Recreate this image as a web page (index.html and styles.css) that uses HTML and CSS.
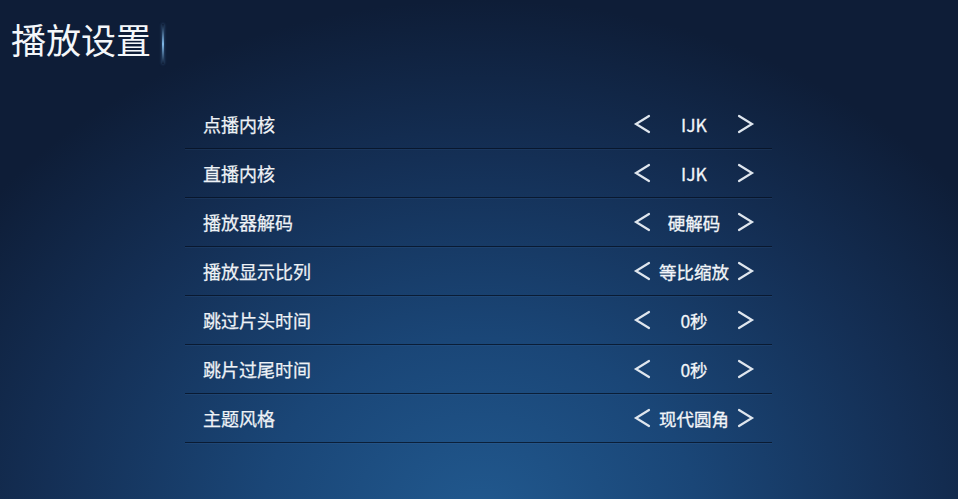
FILE: index.html
```html
<!DOCTYPE html>
<html lang="zh">
<head>
<meta charset="utf-8">
<title>播放设置</title>
<link rel="stylesheet" href="styles.css">
</head>
<body>
<div class="screen">
  <header class="header">
    <h1 class="title">播放设置</h1>
    <span class="glow"></span>
  </header>
  <ul class="list">
    <li class="row"><span class="label">点播内核</span><div class="ctrl"><svg class="arr" viewBox="0 0 18 22"><polyline points="16,3 3,11 16,19"/></svg><span class="val">IJK</span><svg class="arr" viewBox="0 0 18 22"><polyline points="2,3 15,11 2,19"/></svg></div></li>
    <li class="row"><span class="label">直播内核</span><div class="ctrl"><svg class="arr" viewBox="0 0 18 22"><polyline points="16,3 3,11 16,19"/></svg><span class="val">IJK</span><svg class="arr" viewBox="0 0 18 22"><polyline points="2,3 15,11 2,19"/></svg></div></li>
    <li class="row"><span class="label">播放器解码</span><div class="ctrl"><svg class="arr" viewBox="0 0 18 22"><polyline points="16,3 3,11 16,19"/></svg><span class="val">硬解码</span><svg class="arr" viewBox="0 0 18 22"><polyline points="2,3 15,11 2,19"/></svg></div></li>
    <li class="row"><span class="label">播放显示比列</span><div class="ctrl"><svg class="arr" viewBox="0 0 18 22"><polyline points="16,3 3,11 16,19"/></svg><span class="val">等比缩放</span><svg class="arr" viewBox="0 0 18 22"><polyline points="2,3 15,11 2,19"/></svg></div></li>
    <li class="row"><span class="label">跳过片头时间</span><div class="ctrl"><svg class="arr" viewBox="0 0 18 22"><polyline points="16,3 3,11 16,19"/></svg><span class="val">0秒</span><svg class="arr" viewBox="0 0 18 22"><polyline points="2,3 15,11 2,19"/></svg></div></li>
    <li class="row"><span class="label">跳片过尾时间</span><div class="ctrl"><svg class="arr" viewBox="0 0 18 22"><polyline points="16,3 3,11 16,19"/></svg><span class="val">0秒</span><svg class="arr" viewBox="0 0 18 22"><polyline points="2,3 15,11 2,19"/></svg></div></li>
    <li class="row"><span class="label">主题风格</span><div class="ctrl"><svg class="arr" viewBox="0 0 18 22"><polyline points="16,3 3,11 16,19"/></svg><span class="val">现代圆角</span><svg class="arr" viewBox="0 0 18 22"><polyline points="2,3 15,11 2,19"/></svg></div></li>
  </ul>
</div>
</body>
</html>
```

FILE: styles.css
```css
html, body {
  margin: 0;
  padding: 0;
}
body {
  width: 958px;
  height: 499px;
  overflow: hidden;
  font-family: "Noto Sans CJK SC", "Noto Sans", sans-serif;
  color: #e8edf3;
}
.screen {
  width: 958px;
  height: 499px;
  background:
    radial-gradient(ellipse 620px 520px at 480px 520px, #21598f 0%, #1a4677 35%, #142f55 70%, rgba(15,31,58,0) 100%),
    #0e1d37;
  display: flex;
  flex-direction: column;
}
.header {
  height: 100px;
  box-sizing: border-box;
  padding: 20px 0 0 11px;
  display: flex;
  align-items: flex-start;
}
.title {
  margin: 0;
  font-size: 35px;
  line-height: 38px;
  font-weight: 400;
  color: #f4f7fa;
  letter-spacing: 0;
}
.glow {
  width: 2px;
  height: 40px;
  margin: 4px 0 0 11px;
  background: linear-gradient(to bottom, rgba(120,180,230,0) 0%, #7fb6e6 50%, rgba(120,180,230,0) 100%);
  box-shadow: 0 0 3px rgba(110,170,230,0.5);
}
.list {
  list-style: none;
  margin: 0 0 0 185px;
  padding: 0;
  width: 587px;
}
.row {
  height: 48px;
  border-bottom: 1px solid rgba(6,16,34,0.75);
  box-shadow: 0 1px 0 rgba(90,140,200,0.10);
  display: flex;
  align-items: center;
  justify-content: space-between;
  padding: 0 17px 0 18px;
}
.label {
  font-size: 18px;
  font-weight: 400;
  color: #eef2f6;
  -webkit-text-stroke: 0.25px #eef2f6;
}
.ctrl {
  display: flex;
  align-items: center;
}
.arr {
  width: 18px;
  height: 22px;
  fill: none;
  stroke: #dfe6ee;
  stroke-width: 2.2;
  stroke-linecap: round;
  stroke-linejoin: miter;
}
.val {
  width: 86px;
  text-align: center;
  font-size: 17.5px;
  font-weight: 400;
  color: #f2f5f8;
  -webkit-text-stroke: 0.3px #f2f5f8;
}
```
